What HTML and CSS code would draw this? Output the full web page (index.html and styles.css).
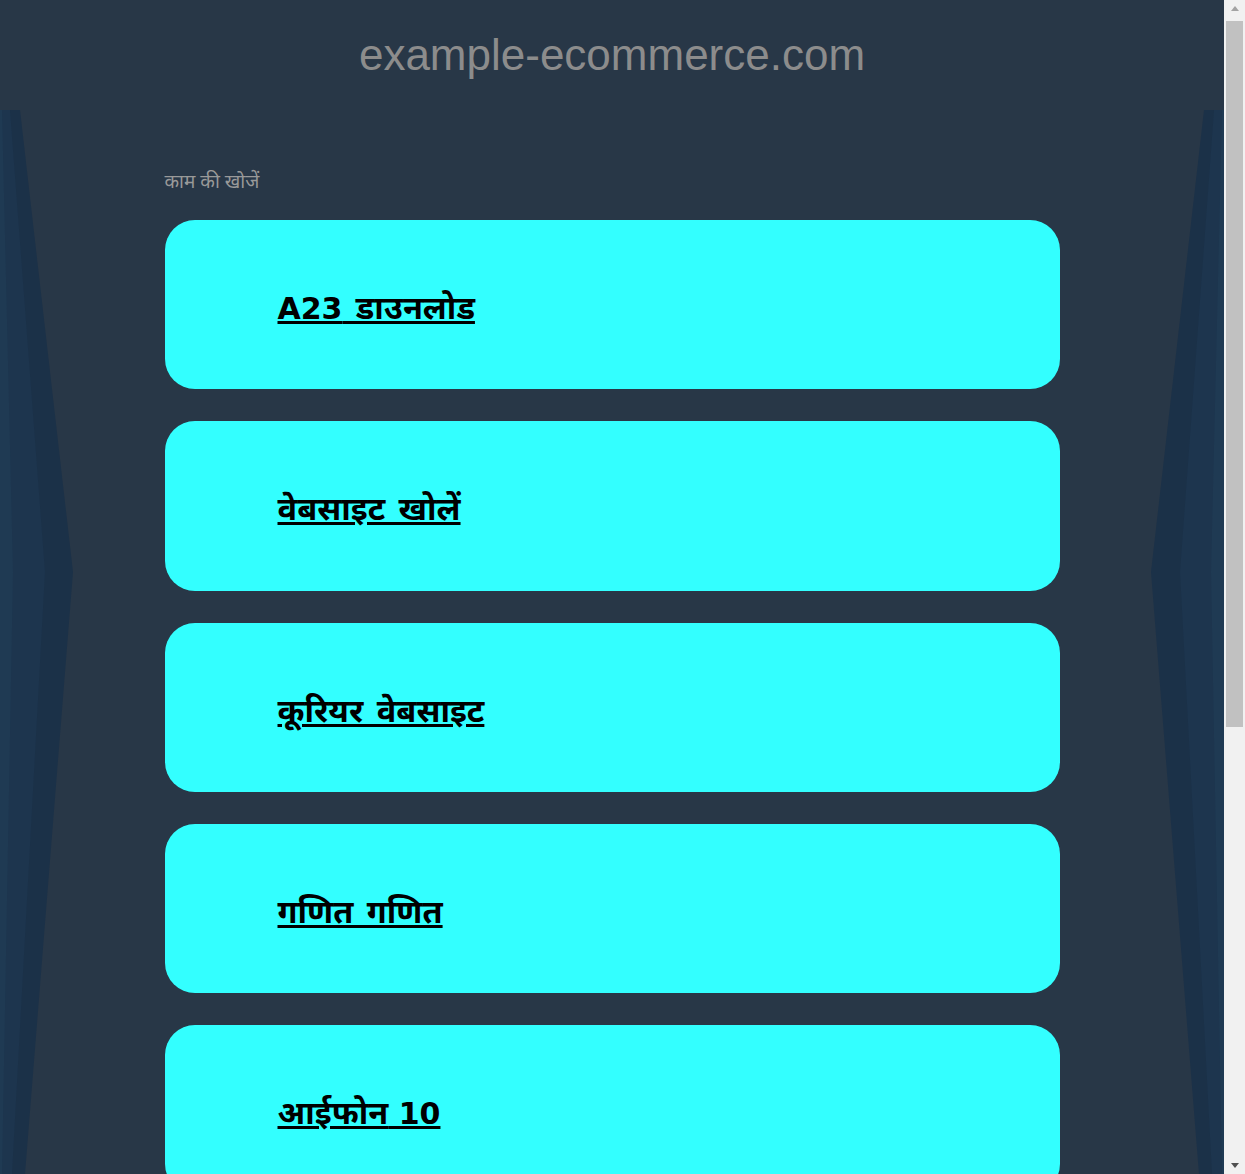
FILE: index.html
```html
<!DOCTYPE html>
<html lang="hi">
<head>
<meta charset="utf-8">
<title>example-ecommerce.com</title>
<link rel="stylesheet" href="styles.css">
</head>
<body>
<div class="deco" aria-hidden="true">
  <svg class="deco-left" viewBox="0 0 80 1064" preserveAspectRatio="none">
    <polygon points="0,0 20,0 73,462 25,1064 0,1064" fill="#1b3148"/>
    <polygon points="0,0 10,0 45,462 12,1064 0,1064" fill="#1d354e"/>
    <polygon points="0,0 2,0 13,462 2,1064 0,1064" fill="#1f3a53"/>
  </svg>
  <svg class="deco-right" viewBox="0 0 80 1064" preserveAspectRatio="none">
    <polygon points="80,0 60,0 7,462 55,1064 80,1064" fill="#1b3148"/>
    <polygon points="80,0 70,0 36,462 68,1064 80,1064" fill="#1d354e"/>
    <polygon points="80,0 78,0 67,462 78,1064 80,1064" fill="#1f3a53"/>
  </svg>
</div>
<header class="site-header">
  <h1 class="site-title">example-ecommerce.com</h1>
</header>
<main class="content">
  <p class="section-label">काम की खोजें</p>
  <ul class="link-list">
    <li class="link-card"><a class="link-text" href="#">A23<span class="dev"> डाउनलोड</span></a></li>
    <li class="link-card"><a class="link-text" href="#"><span class="dev">वेबसाइट खोलें</span></a></li>
    <li class="link-card"><a class="link-text" href="#"><span class="dev">कूरियर वेबसाइट</span></a></li>
    <li class="link-card"><a class="link-text" href="#"><span class="dev">गणित गणित</span></a></li>
    <li class="link-card"><a class="link-text" href="#"><span class="dev">आईफोन</span> 10</a></li>
  </ul>
</main>
<div class="scrollbar" aria-hidden="true">
  <div class="sb-arrow sb-up"></div>
  <div class="sb-track"><div class="sb-thumb"></div></div>
  <div class="sb-arrow sb-down"></div>
</div>
</body>
</html>
```

FILE: styles.css
```css
html, body {
  margin: 0;
  padding: 0;
}
body {
  background: #283747;
  font-family: "DejaVu Sans", sans-serif;
  position: relative;
  padding-right: 21px;
}
.deco {
  position: absolute;
  top: 110px;
  left: 0;
  right: 21px;
  height: 1064px;
  z-index: 0;
  pointer-events: none;
}
.deco svg {
  position: absolute;
  top: 0;
  width: 80px;
  height: 1064px;
}
.deco-left { left: 0; }
.deco-right { right: 0; }
.site-header {
  height: 110px;
  display: flex;
  align-items: center;
  justify-content: center;
  position: relative;
  z-index: 1;
}
.site-title {
  margin: 0;
  font-family: "Liberation Sans", Arial, sans-serif;
  font-weight: normal;
  font-size: 44px;
  color: #8c8c8c;
}
.content {
  position: relative;
  z-index: 1;
  width: 895px;
  margin: 0 auto;
  padding: 58px 0 120px 0;
}
.section-label {
  margin: 0 0 26px 0;
  font-family: "Noto Sans", "Noto Sans Devanagari", sans-serif;
  font-size: 19px;
  line-height: 26px;
  color: #999999;
}
.link-list {
  list-style: none;
  margin: 0;
  padding: 0;
  display: flex;
  flex-direction: column;
  gap: 32px;
}
.link-card {
  height: 169.25px;
  box-sizing: border-box;
  padding-top: 8px;
  background: #33ffff;
  border-radius: 30px;
  display: flex;
  align-items: center;
  padding-left: 113px;
}
.link-text {
  color: #000000;
  font-family: "DejaVu Sans", "Noto Sans Devanagari", sans-serif;
  font-weight: bold;
  font-size: 30px;
  line-height: 40px;
  text-decoration: underline;
}
.dev {
  font-size: 32.5px;
  word-spacing: 2px;
}
.scrollbar {
  position: fixed;
  top: 0;
  right: 0;
  width: 21px;
  height: 100vh;
  background: #f1f1f1;
  display: flex;
  flex-direction: column;
  z-index: 5;
}
.sb-arrow {
  height: 17px;
  display: flex;
  align-items: center;
  justify-content: center;
}
.sb-arrow::before {
  content: "";
  width: 0;
  height: 0;
  border-left: 4.5px solid transparent;
  border-right: 4.5px solid transparent;
}
.sb-up::before {
  border-bottom: 5px solid #a3a3a3;
}
.sb-down::before {
  border-top: 5px solid #505050;
}
.sb-track {
  flex: 1;
  padding: 4px 2px 0 2px;
}
.sb-thumb {
  height: 706px;
  background: #c1c1c1;
}
```
